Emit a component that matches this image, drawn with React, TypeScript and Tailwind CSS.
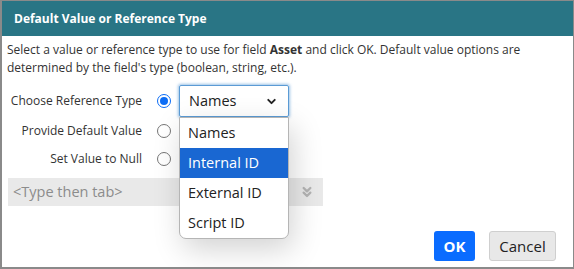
import { ChevronDown, ChevronsDown } from "lucide-react";

const options = ["Names", "Internal ID", "External ID", "Script ID"];

function Radio({ checked }: { checked?: boolean }) {
  return (
    <span
      className={
        "flex h-[14px] w-[14px] shrink-0 items-center justify-center rounded-full border bg-white " +
        (checked ? "border-[#0b6cf5]" : "border-[#767676]")
      }
    >
      {checked && <span className="h-[8px] w-[8px] rounded-full bg-[#0b6cf5]" />}
    </span>
  );
}

export default function App() {
  const labelCls = "w-[135px] shrink-0 whitespace-nowrap text-right text-[12px] text-[#333]";

  return (
    <div
      className="relative flex h-[269px] w-[574px] flex-col overflow-hidden border-t border-r border-b-2 border-l-2 border-[#8a8a8a] bg-white"
      style={{ fontFamily: '"Open Sans", "Liberation Sans", sans-serif' }}
    >
      {/* title bar */}
      <div className="flex h-[35px] shrink-0 items-center bg-[#297585] pl-[12px] text-[12px] font-bold text-white">
        Default Value or Reference Type
      </div>

      <div className="flex flex-1 flex-col px-[5px] pt-[5px]">
        <p className="text-[12px] leading-[18px] text-[#333]">
          Select a value or reference type to use for field <b>Asset</b> and click OK. Default value options are
          <br />
          determined by the field's type (boolean, string, etc.).
        </p>

        {/* reference type */}
        <div className="mt-[8px] flex h-[32px] items-center">
          <span className={labelCls}>Choose Reference Type</span>
          <span className="ml-[15px]">
            <Radio checked />
          </span>
          <div className="ml-[8px] flex h-[32px] w-[110px] items-center justify-between rounded-[2px] border border-[#5b9bd5] pl-[9px] pr-[10px] text-[14.5px] text-[#222] shadow-[0_0_3px_1px_rgba(91,155,213,0.6)]">
            Names
            <ChevronDown size={13} strokeWidth={3.5} className="text-[#222]" />
          </div>
        </div>

        <div className="flex h-[28px] items-center">
          <span className={labelCls}>Provide Default Value</span>
          <span className="ml-[15px]">
            <Radio />
          </span>
        </div>

        <div className="flex h-[28px] items-center">
          <span className={labelCls}>Set Value to Null</span>
          <span className="ml-[15px]">
            <Radio />
          </span>
        </div>

        <div className="mt-[5px] ml-[1px] flex h-[28px] w-[315px] items-center justify-between bg-[#e9e9e9] pl-[5px] pr-[8px]">
          <span className="text-[14.5px] text-[#8c8c8c]">&lt;Type then tab&gt;</span>
          <ChevronsDown size={16} strokeWidth={3.5} className="text-[#b3b3b3]" />
        </div>

        <div className="mt-auto mb-[6px] flex justify-end gap-[14px] pr-[12px]">
          <button className="h-[30px] w-[41px] rounded-[3px] bg-[#0a6cff] text-[15px] font-bold text-white">OK</button>
          <button className="h-[30px] w-[67px] rounded-[3px] border border-[#cfcfcf] bg-[#e8e8e8] text-[15px] text-[#222]">
            Cancel
          </button>
        </div>
      </div>

      {/* open dropdown list */}
      <ul className="absolute top-[116px] left-[177px] w-[110px] overflow-hidden rounded-b-[7px] border border-[#b5b5b5] bg-white shadow-[4px_10px_30px_rgba(0,0,0,0.18)]">
        {options.map((o) => (
          <li
            key={o}
            className={
              "flex h-[30px] items-center pl-[8px] text-[14.5px] " +
              (o === "Internal ID" ? "bg-[#1967d2] text-white" : "text-[#222]")
            }
          >
            {o}
          </li>
        ))}
      </ul>
    </div>
  );
}
